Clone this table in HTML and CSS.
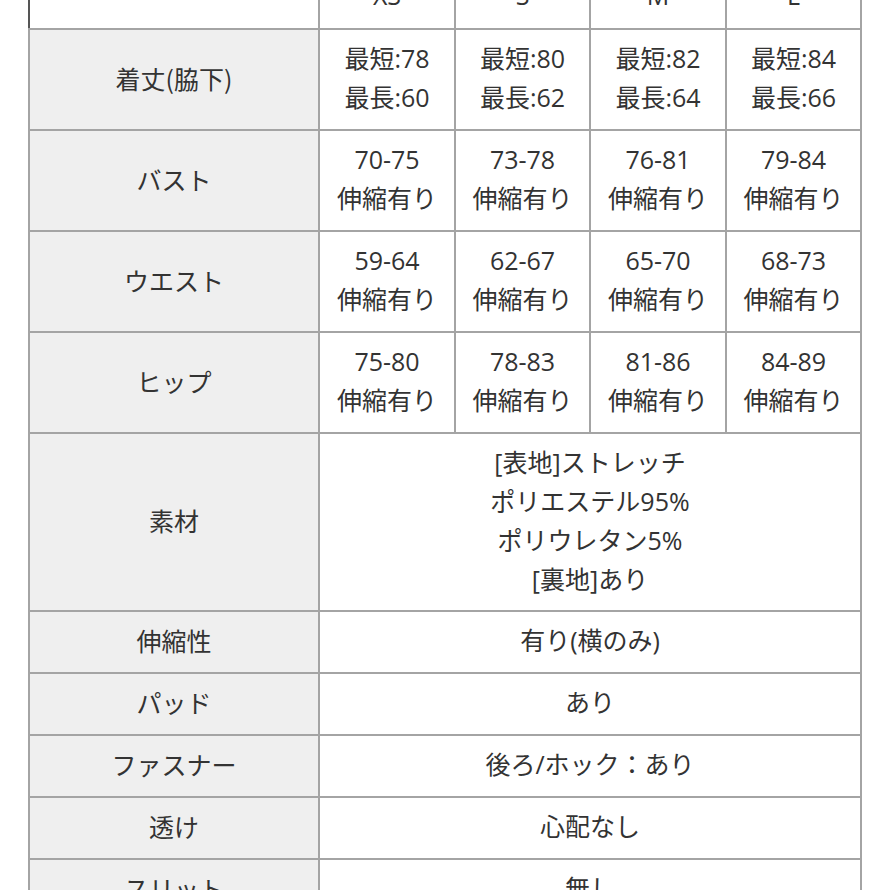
FILE: index.html
```html
<!DOCTYPE html>
<html lang="ja">
<head>
<meta charset="utf-8">
<title>サイズ表</title>
<link rel="stylesheet" href="styles.css">
</head>
<body>
<div class="page">
  <div class="size-table">
    <div class="cell head corner"></div>
    <div class="cell val">XS</div>
    <div class="cell val">S</div>
    <div class="cell val">M</div>
    <div class="cell val">L</div>

    <div class="cell label">着丈(脇下)</div>
    <div class="cell val">最短:78<br>最長:60</div>
    <div class="cell val">最短:80<br>最長:62</div>
    <div class="cell val">最短:82<br>最長:64</div>
    <div class="cell val">最短:84<br>最長:66</div>

    <div class="cell label">バスト</div>
    <div class="cell val">70-75<br>伸縮有り</div>
    <div class="cell val">73-78<br>伸縮有り</div>
    <div class="cell val">76-81<br>伸縮有り</div>
    <div class="cell val">79-84<br>伸縮有り</div>

    <div class="cell label">ウエスト</div>
    <div class="cell val">59-64<br>伸縮有り</div>
    <div class="cell val">62-67<br>伸縮有り</div>
    <div class="cell val">65-70<br>伸縮有り</div>
    <div class="cell val">68-73<br>伸縮有り</div>

    <div class="cell label">ヒップ</div>
    <div class="cell val">75-80<br>伸縮有り</div>
    <div class="cell val">78-83<br>伸縮有り</div>
    <div class="cell val">81-86<br>伸縮有り</div>
    <div class="cell val">84-89<br>伸縮有り</div>

    <div class="cell label">素材</div>
    <div class="cell val wide">[表地]ストレッチ<br>ポリエステル95%<br>ポリウレタン5%<br>[裏地]あり</div>

    <div class="cell label">伸縮性</div>
    <div class="cell val wide">有り(横のみ)</div>

    <div class="cell label">パッド</div>
    <div class="cell val wide">あり</div>

    <div class="cell label">ファスナー</div>
    <div class="cell val wide">後ろ/ホック：あり</div>

    <div class="cell label">透け</div>
    <div class="cell val wide">心配なし</div>

    <div class="cell label">スリット</div>
    <div class="cell val wide">無し</div>
  </div>
</div>
</body>
</html>
```

FILE: styles.css
```css
html, body {
  margin: 0;
  padding: 0;
  background: #ffffff;
  overflow: hidden;
}

.page {
  width: 890px;
  height: 890px;
  overflow: hidden;
}

.size-table {
  margin: -36px 0 0 28px;
  width: 834px;
  display: grid;
  grid-template-columns: 288px 134px 133px 134px 133px;
  grid-template-rows: 62px 99px 99px 99px 99px 176px 60px 60px 60px 60px 60px;
  gap: 2px;
  padding: 2px;
  box-sizing: border-box;
  background: #a4a4a4;
  font-family: "Open Sans", "Noto Sans CJK JP", sans-serif;
  font-size: 25px;
  line-height: 39px;
  color: #333333;
}

.cell {
  display: flex;
  align-items: center;
  justify-content: center;
  text-align: center;
  background: #ffffff;
  padding-bottom: 3px;
  box-sizing: border-box;
}

.label {
  background: #efefef;
  font-family: "Noto Sans CJK JP", sans-serif;
  font-size: 25px;
}

.corner {
  background: #ffffff;
  border-left: 2px solid #555555;
  margin-left: -2px;
}

.wide {
  grid-column: span 4;
}
```
